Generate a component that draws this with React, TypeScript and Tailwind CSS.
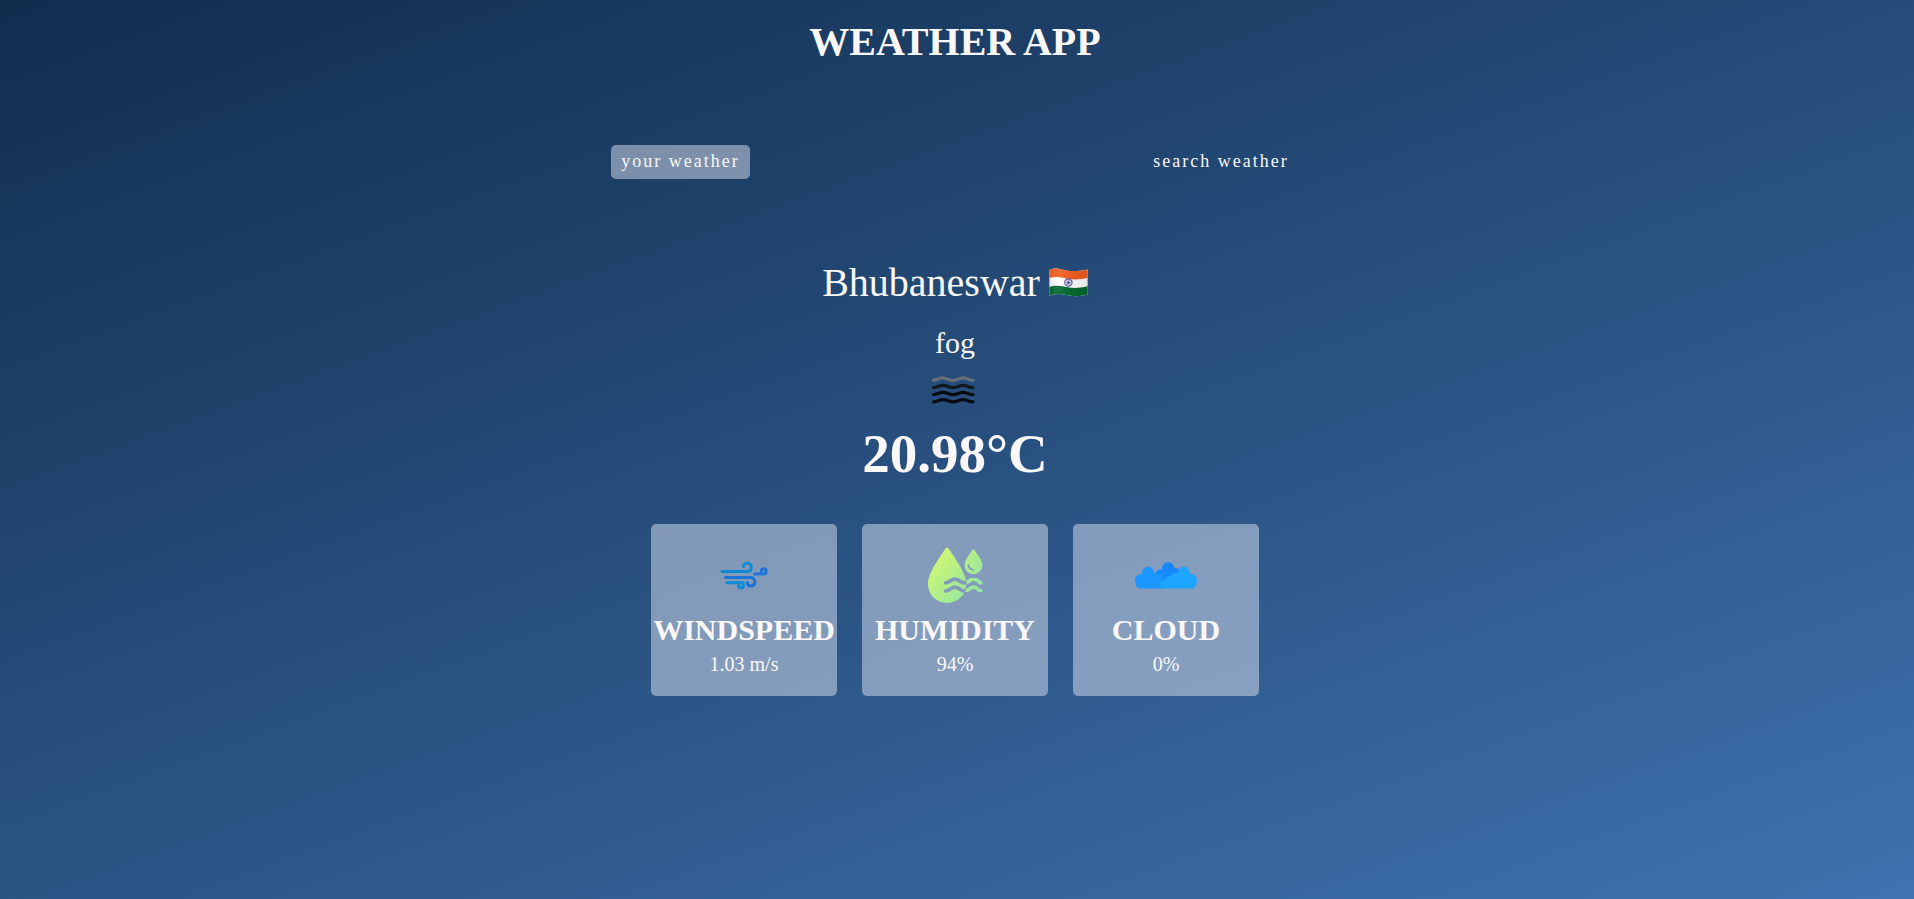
import { useState, type ReactNode } from "react";

function IndiaFlag() {
  return (
    <svg viewBox="0 0 40 30" className="h-[30px] w-10" role="img" aria-label="India">
      <defs>
        <clipPath id="flag-shape">
          <path d="M1.4 2C5 0 9 0 14 1.4C21 3.4 29 3.6 39.6 1.4V26.6C31 29 24 28.4 17 26.8C11 25.4 6 25.8 1.4 28Z" />
        </clipPath>
        <linearGradient id="flag-shade" x1="0" x2="1" y1="0" y2="0">
          <stop offset="0" stopColor="#000" stopOpacity=".12" />
          <stop offset=".25" stopColor="#fff" stopOpacity=".08" />
          <stop offset=".65" stopColor="#000" stopOpacity=".06" />
          <stop offset="1" stopColor="#000" stopOpacity=".1" />
        </linearGradient>
      </defs>
      <g clipPath="url(#flag-shape)">
        <rect width="40" height="30" fill="#fff" />
        <path d="M0 0H40V9.8C30 12.2 22 11.6 15 9.8C9 8.4 5 8.6 0 10.6Z" fill="#f65e22" />
        <path d="M0 19.6C5 17.2 10 17.2 16 18.6C23 20.4 31 20.6 40 18V30H0Z" fill="#046b30" />
        <circle cx="20.4" cy="14.6" r="3.7" fill="#dddcf0" stroke="#5c5da4" strokeWidth="1.1" />
        <path d="M20.4 11V18.2M16.8 14.6H24M17.9 12.1L22.9 17.1M22.9 12.1L17.9 17.1" stroke="#7c7db8" strokeWidth=".5" />
        <circle cx="20.4" cy="14.6" r="1.2" fill="#3f4094" />
        <rect width="40" height="30" fill="url(#flag-shade)" />
      </g>
    </svg>
  );
}

function FogIcon() {
  return (
    <svg viewBox="0 0 64 64" className="size-16" fill="none" strokeWidth="3.2" strokeLinecap="round" role="img" aria-label="fog">
      <path d="M10.5 20.4C14 19.8 17 17.4 20 17.8C24 18.4 26 20.4 30 20.4C34 20.4 36 18 40 17.8C43 17.6 46 20 50 20.4" stroke="#67707a" />
      <path d="M10.5 27.6C14 27.8 16 25.4 20 25.4C24 25.4 26 27.6 30 27.6C34 27.6 36 25.4 40 25.4C44 25.4 46 27.8 50 27.6" stroke="#101820" />
      <path d="M10.5 34.6C14 34.8 16 32.4 20 32.4C24 32.4 26 34.6 30 34.6C34 34.6 36 32.4 40 32.4C44 32.4 46 34.8 50 34.6" stroke="#080b10" />
      <path d="M10.5 41.8C14 42 16 39.6 20 39.6C24 39.6 26 41.8 30 41.8C34 41.8 36 39.6 40 39.6C44 39.6 46 42 50 41.8" stroke="#080b10" />
    </svg>
  );
}

function WindIcon() {
  return (
    <svg viewBox="0 0 64 64" className="size-16" fill="none" strokeWidth="3" strokeLinecap="round" aria-hidden="true">
      <path d="M10 27.6H35.8C38.2 27.6 39.2 25.4 39.2 23.2C39.2 20.8 37.4 19 35.2 19C33 19 31.6 20.6 31.6 22.6" stroke="#0b8bd6" />
      <path d="M14.6 38.8H29.2C31 38.8 31.4 40.2 31.4 41.4C31.4 42.8 30.4 43.8 29 43.8C27.6 43.8 26.6 42.8 26.6 41.8" stroke="#0b8bd6" />
      <path d="M13.4 33.4H38.6C41.2 33.4 42.8 35.4 42.8 38C42.8 40.6 41 42 38.8 42C36.6 42 35.2 40.6 35.2 38.4" stroke="#1c74d6" />
      <path d="M42.6 30H51.4C53.2 30 54.2 28.8 54.2 27.2C54.2 25.8 53.2 24.8 51.8 24.8C50.4 24.8 49.4 25.8 49.4 27.2" stroke="#1c74d6" />
    </svg>
  );
}

function HumidityIcon() {
  const waves =
    "M22.8 38.8C26 38.8 28 35.2 32 35.2C36 35.2 37 38.8 41.6 38.8C46 38.8 47 35.2 51 35.2C54.4 35.2 55.4 38.8 57.8 38.8M22.8 47C26 47 28 43.2 32 43.2C36 43.2 37 47 41.6 47C46 47 47 43.2 51 43.2C54.4 43.2 55.4 47 57.8 47";
  const drop = "M24 3.7C25.4 3.7 26 5 27 6.6C32 14.6 43.3 29 43.3 40C43.3 50.6 34.8 59 24 59C13.4 59 5 50.6 5 40C5 29 16.2 14.6 21.2 6.6C22.2 5 22.8 3.7 24 3.7Z";
  return (
    <svg viewBox="0 0 64 64" className="size-16" fill="none" aria-hidden="true">
      <defs>
        <linearGradient id="humidity-fill" gradientUnits="userSpaceOnUse" x1="10" y1="18" x2="52" y2="54">
          <stop offset="0" stopColor="#cdf673" />
          <stop offset="1" stopColor="#90e5a5" />
        </linearGradient>
        <mask id="humidity-drop">
          <path d={drop} fill="#fff" />
          <path d={waves} stroke="#000" strokeWidth="3.8" strokeLinecap="round" />
        </mask>
        <mask id="humidity-waves">
          <rect width="64" height="64" fill="#fff" />
          <path d={drop} fill="#000" stroke="#000" strokeWidth=".8" />
        </mask>
      </defs>
      <rect width="64" height="64" fill="url(#humidity-fill)" mask="url(#humidity-drop)" />
      <path d={waves} stroke="url(#humidity-fill)" strokeWidth="3.8" strokeLinecap="round" mask="url(#humidity-waves)" />
      <path d="M50.4 5.6C51.2 5.6 51.8 6.6 52.4 7.4C55 11 59.4 16.4 59.4 21.2C59.4 26.2 55.4 30 50.5 30C45.6 30 41.7 26.2 41.7 21.2C41.7 16.4 46 11 48.4 7.4C49 6.6 49.6 5.6 50.4 5.6Z" fill="url(#humidity-fill)" />
      <path d="M45.4 20.8C45.6 23.6 47.6 25.6 50.4 25.8" stroke="#8296b7" strokeWidth="1.8" strokeLinecap="round" />
    </svg>
  );
}

function CloudIcon() {
  return (
    <svg viewBox="0 0 64 64" className="size-16" aria-hidden="true">
      <path d="M21 30C22 26.4 25 25 28 25.2C27.8 21 30.4 18.2 34 18.2C37.8 18.2 40.4 21 40.2 24.2C42.6 23.8 45 24.8 46 27L42 38H24Z" fill="#1787ff" />
      <path d="M5.4 44.6C2.4 43.4 1 40 1 36.4C1 32.4 3.8 29.8 8.2 30C8 25.6 10.4 22.8 14 22.8C17.6 22.8 20 25.2 19.8 29C24.6 27.4 29 30 29.4 33.4L31 44.6Z" fill="#1b95ff" />
      <path d="M28 44.6C26.2 43 25.6 40.6 26.2 38.6C26.8 36.6 28.8 36 30.4 36.2C30.6 33.4 33.4 31.8 36.2 32.6C37.4 29.4 41 27.8 44.2 28.8C44 25.4 46.2 22.8 49.6 22.8C53.4 22.8 56 25.6 55.6 29.8C60 29.6 63 32.6 63 36.6C63 40.6 61.4 43.6 58.6 44.6Z" fill="#1ea5ff" />
    </svg>
  );
}

function Metric({ icon, name, value }: { icon: ReactNode; name: string; value: string }) {
  return (
    <article className="flex w-[186px] flex-col items-center rounded-[5px] bg-[#dbe2ef]/50 py-5">
      {icon}
      <h2 className="mt-[5px] text-[30px] leading-[34px] font-bold">{name}</h2>
      <p className="mt-[5px] text-xl leading-6">{value}</p>
    </article>
  );
}

const tabs = ["your weather", "search weather"];

export default function App() {
  const [active, setActive] = useState(tabs[0]);
  return (
    <main className="flex min-h-screen flex-col items-center bg-[linear-gradient(160deg,#112d4e_0%,#3f72af_100%)] pt-5 pr-1 font-['Liberation_Serif',serif] text-[#f9f7f7]">
      <h1 className="text-[40px] leading-[44px] font-bold">WEATHER APP</h1>
      <nav className="mt-[81px] flex w-9/25 justify-between">
        {tabs.map((tab) => (
          <button
            key={tab}
            type="button"
            aria-pressed={tab === active}
            onClick={() => setActive(tab)}
            className={
              tab === active
                ? "rounded-[5px] bg-[#dbe2ef]/50 px-[10px] pt-1 pb-1.5 text-lg leading-6 tracking-[2px]"
                : "rounded-[5px] px-[10px] pt-1 pb-1.5 text-lg leading-6 tracking-[2px]"
            }
          >
            {tab}
          </button>
        ))}
      </nav>
      <section className="mt-[81px] flex flex-col items-center">
        <div className="flex items-center gap-2">
          <p className="text-[40px] leading-[46px]">Bhubaneswar</p>
          <IndiaFlag />
        </div>
        <p className="mt-5 text-[30px] leading-[34px]">fog</p>
        <FogIcon />
        <p className="text-[55px] leading-[60px] font-bold">20.98°C</p>
        <div className="mt-10 flex gap-[25px]">
          <Metric icon={<WindIcon />} name="WINDSPEED" value="1.03 m/s" />
          <Metric icon={<HumidityIcon />} name="HUMIDITY" value="94%" />
          <Metric icon={<CloudIcon />} name="CLOUD" value="0%" />
        </div>
      </section>
    </main>
  );
}
